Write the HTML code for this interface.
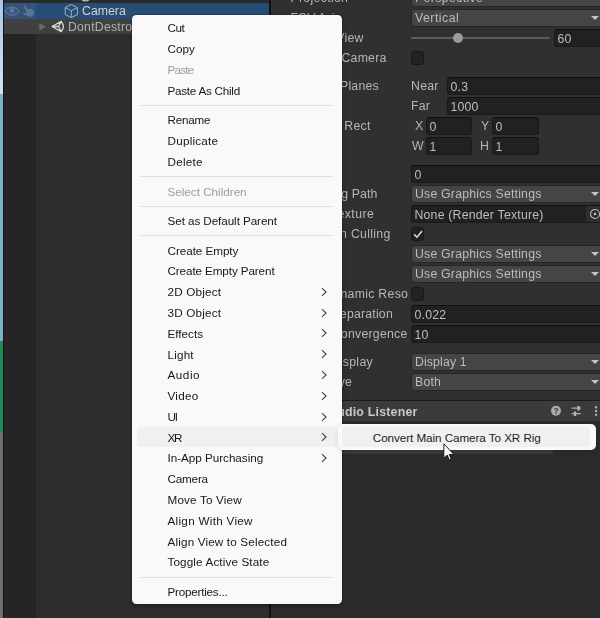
<!DOCTYPE html>
<html><head><meta charset="utf-8"><title>Unity context menu</title>
<style>
html,body{margin:0;padding:0}
body{width:600px;height:618px;overflow:hidden;position:relative;background:#2c2c2c;font-family:"Liberation Sans",sans-serif;}
div{box-sizing:border-box}
.abs{position:absolute}
/* left desktop strip */
.strip{position:absolute;left:0;width:2.600px}
/* hierarchy */
#hier{position:absolute;left:4px;top:0;width:265px;height:618px;background:#2d2d2d}
#hier .col{position:absolute;left:0;top:0;width:32px;height:618px;background:#252525}
#hier .toprow{position:absolute;left:0;top:0;width:265px;height:3px;background:#2a2a2a}
#hier .sel{position:absolute;left:0;top:3px;width:265px;height:16px;background:#264d74}
#hier .sel .c2{position:absolute;left:0;top:0;width:32px;height:16px;background:#34537b}
#hier .hov{position:absolute;left:0;top:19px;width:265px;height:15px;background:#404040}
.ht{will-change:transform;position:absolute;font-size:12.2px;line-height:16px;color:#d0d0d0;white-space:nowrap}
#divider{position:absolute;left:269px;top:0;width:2px;height:618px;background:#121212}
/* inspector */
#insp{position:absolute;left:271px;top:0;width:329px;height:618px;background:#303030;overflow:hidden}
#insp .in{will-change:transform;position:absolute;left:-271px;top:0;width:600px;height:618px}
.lb{position:absolute;font-size:12.3px;line-height:19px;height:18px;color:#b6b6b6;white-space:nowrap;letter-spacing:.2px}
.dd{position:absolute;left:410.500px;width:200px;height:18px;background:#454545;border:1px solid #262626;border-radius:3px;}
.dd span{position:absolute;left:3.500px;top:-1px;font-size:12.3px;line-height:18px;color:#bcbcbc;white-space:nowrap;letter-spacing:.2px}
.dd i{position:absolute;left:179.200px;top:6px;width:0;height:0;border-left:4px solid transparent;border-right:4px solid transparent;border-top:4.5px solid #c4c4c4}
.fd{position:absolute;height:18px;background:#212121;border:1px solid #1a1a1a;border-top-color:#101010;border-radius:3px;}
.fd span{position:absolute;left:2.500px;top:0px;font-size:12.3px;line-height:18px;color:#bebebe;white-space:nowrap;letter-spacing:.2px}
.cb{position:absolute;left:410.800px;width:13.200px;height:13.400px;margin-top:.2px;background:#222222;border:1px solid #181818;border-radius:3px}
.cb svg{position:absolute;left:-1.300px;top:-1.200px;width:14px;height:14px}
.trk{position:absolute;left:411px;top:37px;width:138.600px;height:2px;background:#5c5c5c;border-radius:1px}
.knob{position:absolute;left:453px;top:33px;width:10px;height:10px;border-radius:5px;background:#9a9a9a}
.pick{position:absolute;left:585.500px;top:206px;width:18px;height:16px;background:#2e2e2e}
.pick svg{position:absolute;left:3.200px;top:2px;width:12px;height:12px}
#hdr{position:absolute;left:271px;top:400px;width:329px;height:21px;background:#3b3b3b;border-top:1px solid #1b1b1b}
#hdr .t{will-change:transform;position:absolute;left:57px;top:1px;font-size:12.4px;font-weight:bold;line-height:20px;color:#c8c8c8;letter-spacing:.2px;white-space:nowrap}
#below{position:absolute;left:271px;top:421px;width:329px;height:197px;background:#2b2b2b}
#below .b1{position:absolute;left:52px;top:8px;width:230px;height:25px;background:#3b3b3b;border-radius:3px}
/* menu */
#menu{position:absolute;left:132px;top:15px;width:210px;height:589px;background:#f9f9f9;border-radius:4.500px;box-shadow:0 0 0 .5px rgba(0,0,0,.2),0 2px 5px rgba(0,0,0,.28)}
.mi{position:absolute;left:4px;width:200px;height:20.8px;border-radius:3px}
.mi span{position:absolute;left:31.5px;top:0;font-size:11.7px;line-height:20.8px;color:#171717;white-space:nowrap}
.mi.dis span{color:#9d9d9d}
.hot{position:absolute;left:4.500px;top:412px;width:199.200px;height:20.400px;background:#f0f0f0;border-radius:3.500px}
.chev{position:absolute;left:184.600px;top:4.700px;width:6px;height:10px}
.sep{position:absolute;left:9px;width:192px;height:1px;background:#dedede}
#sub{position:absolute;left:338px;top:424px;width:258px;height:26px;background:#f9f9f9;border-radius:5px;box-shadow:0 0 0 .5px rgba(0,0,0,.06),0 1px 5px rgba(0,0,0,.16)}
#sub .h{position:absolute;left:4px;top:3px;width:248px;height:20px;background:#f0f0f0;border-radius:3px}
#sub span{position:absolute;left:34.800px;top:3.700px;letter-spacing:-.07px;font-size:11.7px;line-height:20px;color:#1b1b1b;white-space:nowrap}
#cursor{position:absolute;left:443.400px;top:442.900px;width:12.040px;height:18.060px}
</style></head>
<body>
<div class="strip" style="top:0;height:94px;background:linear-gradient(#a9c6ea,#cfe4f7)"></div>
<div class="strip" style="top:94px;height:247px;background:#7db1c6"></div>
<div class="strip" style="top:341px;height:91.800px;background:#1f8a5a"></div>
<div class="strip" style="top:432.800px;height:186px;background:#746c66"></div>
<div class="abs" style="left:2.600px;top:0;width:1.400px;height:618px;background:#141414"></div>

<div id="hier">
  <div class="col"></div>
  <div class="toprow"></div>
  <div class="sel"><div class="c2"></div></div>
  <div class="hov"></div>
  <svg class="abs" style="left:0;top:0" width="120" height="40" viewBox="4 0 120 40">
    <path d="M5.200 11.100c2.200-2.900 4.400-4 6.900-4s4.700 1.100 6.900 4c-2.200 2.900-4.400 4-6.900 4s-4.700-1.100-6.900-4z" fill="none" stroke="#5a7499" stroke-width="1.200"/>
    <circle cx="12" cy="10.500" r="2.500" fill="#5a7499"/>
    <path d="M23.300 5.300l1.300-.3 3.300 4.300 1.700-.5 2.600.4 1.500 1.600.1 3.200-1.300 1.900-3 1-1.900-1.500-4.500-1 .1-1.300 3.600-.2z" fill="#5a7499"/>
    <path d="M71.300 4.500l6.100 3.100v6.900l-6.100 3.100-6.100-3.100V7.600z M65.200 7.600l6.100 3.100 6.100-3.100 M71.300 10.700v6.900" fill="none" stroke="#a6b0bc" stroke-width="1" stroke-linejoin="round"/>
    <path d="M39.300 22.800l6.700 3.900-6.700 3.900z" fill="#6a6a6a"/>
    <path d="M52 26.500L61.200 21.300Q65.400 26.500 61.200 31.700Z M52 26.500h6.500 M58.500 26.500l2.700-5 M58.500 26.500l2.700 5" fill="none" stroke="#d4d4d4" stroke-width="1.350" stroke-linejoin="round"/>
    <path d="M81.500 0h8q-1 1.500-4 1.500t-4-1.500z" fill="#b8b8b8"/><rect x="165.500" y="0" width="1.300" height="2" fill="#a0a0a0"/>
  </svg>
  <div class="ht" style="left:78px;top:3px;font-size:12.3px">Camera</div>
  <div class="ht" style="left:63.700px;top:19px;color:#b0b0b0;letter-spacing:.27px">DontDestroyOnLoad</div>
</div>
<div id="divider"></div>
<div id="insp"><div class="in">
<div class="lb" style="left:290.4px;top:-11px;letter-spacing:0.32px">Projection</div>
<div class="dd" style="top:-11px"><span style="letter-spacing:0.37px">Perspective</span><i></i></div>
<div class="lb" style="left:290.4px;top:9px;letter-spacing:-0.15px">FOV Axis</div>
<div class="dd" style="top:9px"><span style="letter-spacing:0.5px">Vertical</span><i></i></div>
<div class="lb" style="left:290.4px;top:29px;letter-spacing:0.24px">Field of View</div>
<div class="trk"></div><div class="knob"></div>
<div class="fd" style="top:29px;left:554px;width:60px"><span>60</span></div>
<div class="lb" style="left:290.4px;top:49px;letter-spacing:0.21px">Physical Camera</div>
<div class="cb" style="top:51px"></div>
<div class="lb" style="left:290.4px;top:77px;letter-spacing:0.2px">Clipping Planes</div>
<div class="lb" style="left:411px;top:77px;letter-spacing:0.25px">Near</div>
<div class="fd" style="top:77px;left:447px;width:170px"><span>0.3</span></div>
<div class="lb" style="left:411px;top:97px;letter-spacing:0.25px">Far</div>
<div class="fd" style="top:97px;left:447px;width:170px"><span>1000</span></div>
<div class="lb" style="left:290.4px;top:117px;letter-spacing:0.31px">Viewport Rect</div>
<div class="lb" style="left:415px;top:117px;letter-spacing:0.25px">X</div>
<div class="fd" style="top:117px;left:426px;width:46px"><span>0</span></div>
<div class="lb" style="left:481px;top:117px;letter-spacing:0.25px">Y</div>
<div class="fd" style="top:117px;left:492px;width:47px"><span>0</span></div>
<div class="lb" style="left:412px;top:137px;letter-spacing:0.25px">W</div>
<div class="fd" style="top:137px;left:426px;width:46px"><span>1</span></div>
<div class="lb" style="left:480px;top:137px;letter-spacing:0.25px">H</div>
<div class="fd" style="top:137px;left:492px;width:47px"><span>1</span></div>
<div class="lb" style="left:290.4px;top:165px;letter-spacing:0.25px">Depth</div>
<div class="fd" style="top:165px;left:411px;width:200px"><span>0</span></div>
<div class="lb" style="left:290.4px;top:185px;letter-spacing:0.11px">Rendering Path</div>
<div class="dd" style="top:185px"><span style="letter-spacing:0.2px">Use Graphics Settings</span><i></i></div>
<div class="lb" style="left:290.4px;top:205px;letter-spacing:0.44px">Target Texture</div>
<div class="fd" style="top:205px;left:411px;width:200px"><span>None (Render Texture)</span></div>
<div class="pick"><svg viewBox="0 0 12 12"><circle cx="6" cy="6" r="4.500" fill="none" stroke="#bdbdbd" stroke-width="1.100"/><circle cx="6" cy="6" r="1.200" fill="#c8c8c8"/></svg></div>
<div class="lb" style="left:290.4px;top:225px;letter-spacing:0.31px">Occlusion Culling</div>
<div class="cb" style="top:227px"><svg viewBox="0 0 14 14"><path d="M3.200 7.400l2.800 2.800L11 4" fill="none" stroke="#dedede" stroke-width="1.500"/></svg></div>
<div class="lb" style="left:290.4px;top:245px;letter-spacing:0.25px">HDR</div>
<div class="dd" style="top:245px"><span style="letter-spacing:0.2px">Use Graphics Settings</span><i></i></div>
<div class="lb" style="left:290.4px;top:265px;letter-spacing:0.25px">MSAA</div>
<div class="dd" style="top:265px"><span style="letter-spacing:0.2px">Use Graphics Settings</span><i></i></div>
<div class="lb" style="left:290.4px;top:285px;letter-spacing:0.28px">Allow Dynamic Reso</div>
<div class="cb" style="top:287px"></div>
<div class="lb" style="left:290.4px;top:305px;letter-spacing:0.2px">Stereo Separation</div>
<div class="fd" style="top:305px;left:411px;width:200px"><span>0.022</span></div>
<div class="lb" style="left:290.4px;top:325px;letter-spacing:0.24px">Stereo Convergence</div>
<div class="fd" style="top:325px;left:411px;width:200px"><span>10</span></div>
<div class="lb" style="left:290.4px;top:353px;letter-spacing:0.34px">Target Display</div>
<div class="dd" style="top:353px"><span style="letter-spacing:0.12px">Display 1</span><i></i></div>
<div class="lb" style="left:290.4px;top:373px;letter-spacing:0.31px">Target Eye</div>
<div class="dd" style="top:373px"><span style="letter-spacing:0.2px">Both</span><i></i></div>
</div></div>
<div id="below"><div class="b1"></div></div>
<div id="hdr"><div class="t">Audio Listener</div>
  <svg class="abs" style="left:270px;top:-1px;will-change:transform" width="59" height="21" viewBox="541 400 59 21">
    <circle cx="556" cy="410.700" r="5" fill="#ababab"/>
    <text x="556" y="414" font-size="8.500" font-weight="bold" font-family="Liberation Sans, sans-serif" text-anchor="middle" fill="#3a3a3a">?</text>
    <path d="M571.600 408.100h9.200M571.600 413.600h9.200" stroke="#b0b0b0" stroke-width="1.100"/>
    <path d="M578.500 406v4.400M575.050 411.500v4.400" stroke="#b8b8b8" stroke-width="2.300"/>
    <rect x="595" y="406.200" width="2.100" height="2.100" fill="#b4b4b4"/><rect x="595" y="409.900" width="2.100" height="2.100" fill="#b4b4b4"/><rect x="595" y="413.700" width="2.100" height="2.100" fill="#b4b4b4"/>
  </svg>
</div>

<div id="menu">
<div class="mi" style="top:3.4px"><span style="letter-spacing:-0.44px">Cut</span></div>
<div class="mi" style="top:24.2px"><span style="letter-spacing:0.01px">Copy</span></div>
<div class="mi dis" style="top:45.0px"><span style="letter-spacing:-0.77px">Paste</span></div>
<div class="mi" style="top:65.7px"><span style="letter-spacing:-0.26px">Paste As Child</span></div>
<div class="sep" style="top:89.9px"></div>
<div class="mi" style="top:95.3px"><span style="letter-spacing:-0.26px">Rename</span></div>
<div class="mi" style="top:116.1px"><span style="letter-spacing:0.23px">Duplicate</span></div>
<div class="mi" style="top:136.9px"><span style="letter-spacing:0.24px">Delete</span></div>
<div class="sep" style="top:161.1px"></div>
<div class="mi dis" style="top:166.5px"><span style="letter-spacing:-0.01px">Select Children</span></div>
<div class="sep" style="top:190.6px"></div>
<div class="mi" style="top:196.0px"><span style="letter-spacing:-0.08px">Set as Default Parent</span></div>
<div class="sep" style="top:220.2px"></div>
<div class="mi" style="top:225.6px"><span style="letter-spacing:-0.05px">Create Empty</span></div>
<div class="mi" style="top:246.4px"><span style="letter-spacing:-0.11px">Create Empty Parent</span></div>
<div class="mi" style="top:267.2px"><span style="letter-spacing:0.18px">2D Object</span><svg class="chev" viewBox="0 0 6 10"><path d="M.9 1.200l4.200 3.800-4.200 3.800" fill="none" stroke="#3c3c3c" stroke-width="1.050"/></svg></div>
<div class="mi" style="top:288.0px"><span style="letter-spacing:0.18px">3D Object</span><svg class="chev" viewBox="0 0 6 10"><path d="M.9 1.200l4.200 3.800-4.200 3.800" fill="none" stroke="#3c3c3c" stroke-width="1.050"/></svg></div>
<div class="mi" style="top:308.7px"><span style="letter-spacing:0.00px">Effects</span><svg class="chev" viewBox="0 0 6 10"><path d="M.9 1.200l4.200 3.800-4.200 3.800" fill="none" stroke="#3c3c3c" stroke-width="1.050"/></svg></div>
<div class="mi" style="top:329.5px"><span style="letter-spacing:0.19px">Light</span><svg class="chev" viewBox="0 0 6 10"><path d="M.9 1.200l4.200 3.800-4.200 3.800" fill="none" stroke="#3c3c3c" stroke-width="1.050"/></svg></div>
<div class="mi" style="top:350.3px"><span style="letter-spacing:0.53px">Audio</span><svg class="chev" viewBox="0 0 6 10"><path d="M.9 1.200l4.200 3.800-4.200 3.800" fill="none" stroke="#3c3c3c" stroke-width="1.050"/></svg></div>
<div class="mi" style="top:371.1px"><span style="letter-spacing:0.28px">Video</span><svg class="chev" viewBox="0 0 6 10"><path d="M.9 1.200l4.200 3.800-4.200 3.800" fill="none" stroke="#3c3c3c" stroke-width="1.050"/></svg></div>
<div class="mi" style="top:391.9px"><span style="letter-spacing:-1.19px">UI</span><svg class="chev" viewBox="0 0 6 10"><path d="M.9 1.200l4.200 3.800-4.200 3.800" fill="none" stroke="#3c3c3c" stroke-width="1.050"/></svg></div>
<div class="hot"></div>
<div class="mi" style="top:412.6px"><span style="letter-spacing:-1.24px">XR</span><svg class="chev" viewBox="0 0 6 10"><path d="M.9 1.200l4.200 3.800-4.200 3.800" fill="none" stroke="#3c3c3c" stroke-width="1.050"/></svg></div>
<div class="mi" style="top:433.4px"><span style="letter-spacing:-0.03px">In-App Purchasing</span><svg class="chev" viewBox="0 0 6 10"><path d="M.9 1.200l4.200 3.800-4.200 3.800" fill="none" stroke="#3c3c3c" stroke-width="1.050"/></svg></div>
<div class="mi" style="top:454.2px"><span style="letter-spacing:-0.19px">Camera</span></div>
<div class="mi" style="top:475.0px"><span style="letter-spacing:0.17px">Move To View</span></div>
<div class="mi" style="top:495.8px"><span style="letter-spacing:0.29px">Align With View</span></div>
<div class="mi" style="top:516.5px"><span style="letter-spacing:0.16px">Align View to Selected</span></div>
<div class="mi" style="top:537.3px"><span style="letter-spacing:0.13px">Toggle Active State</span></div>
<div class="sep" style="top:561.5px"></div>
<div class="mi" style="top:566.9px"><span style="letter-spacing:-0.23px">Properties...</span></div>
</div>
<div id="sub"><div class="h"></div><span>Convert Main Camera To XR Rig</span></div>
<svg id="cursor" viewBox="-1 -1 14 21"><path d="M0 0V16.800L3.900 13.100 6.300 18.800 8.600 17.800 6.200 12.300H11.600Z" fill="#fff" stroke="#151515" stroke-width="1.100" stroke-linejoin="round"/></svg>
</body></html>
